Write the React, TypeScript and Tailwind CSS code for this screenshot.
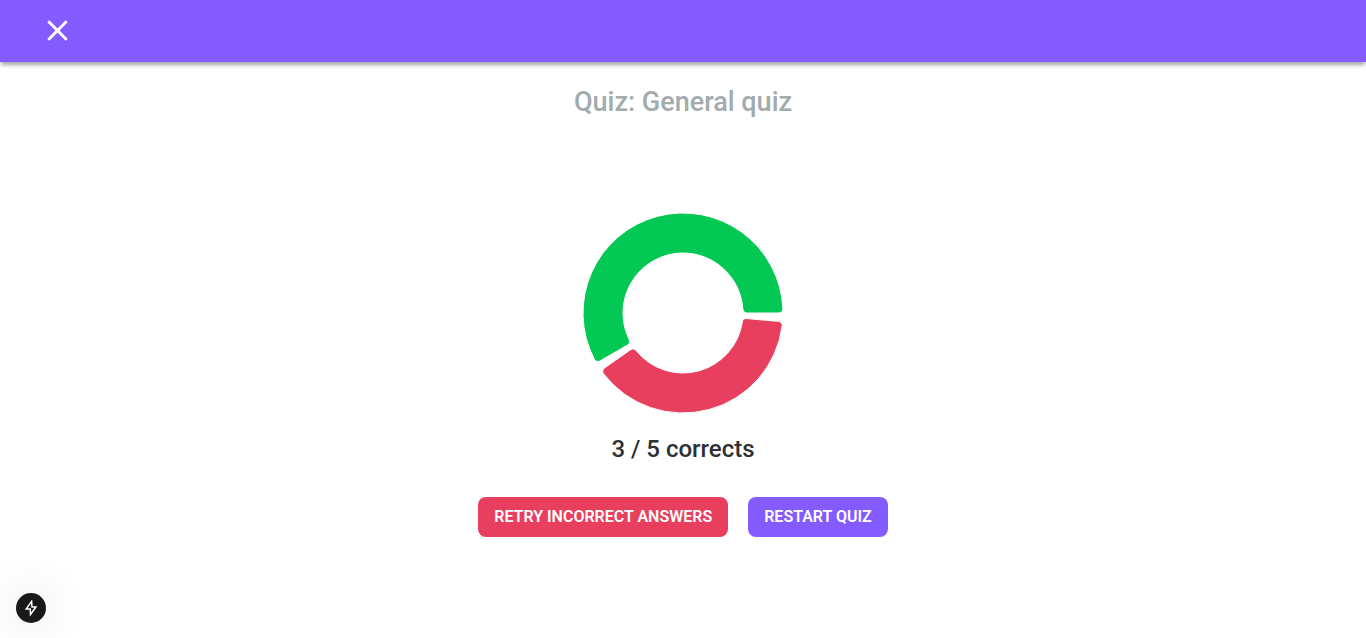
const SIZE = 200;
const OUTER = 100;
const INNER = 60;
const CORNER = 4;

function polar(radius: number, angle: number) {
  const rad = (-angle * Math.PI) / 180;
  return { x: SIZE / 2 + Math.cos(rad) * radius, y: SIZE / 2 + Math.sin(rad) * radius };
}

function corner(radius: number, angle: number, sign: number, external: boolean) {
  const centerRadius = radius + (external ? CORNER : -CORNER);
  const theta = Math.asin(CORNER / centerRadius);
  return {
    onArc: polar(radius, angle + (sign * theta * 180) / Math.PI),
    onLine: polar(centerRadius * Math.cos(theta), angle),
  };
}

/** Ring segment with rounded corners, counter-clockwise from start to end (degrees). */
function sectorPath(start: number, end: number) {
  const large = end - start > 180 ? 1 : 0;
  const a = corner(OUTER, start, 1, false);
  const b = corner(OUTER, end, -1, false);
  const c = corner(INNER, end, -1, true);
  const d = corner(INNER, start, 1, true);
  return [
    `M${a.onLine.x},${a.onLine.y}`,
    `A${CORNER},${CORNER} 0 0 0 ${a.onArc.x},${a.onArc.y}`,
    `A${OUTER},${OUTER} 0 ${large} 0 ${b.onArc.x},${b.onArc.y}`,
    `A${CORNER},${CORNER} 0 0 0 ${b.onLine.x},${b.onLine.y}`,
    `L${c.onLine.x},${c.onLine.y}`,
    `A${CORNER},${CORNER} 0 0 0 ${c.onArc.x},${c.onArc.y}`,
    `A${INNER},${INNER} 0 ${large} 1 ${d.onArc.x},${d.onArc.y}`,
    `A${CORNER},${CORNER} 0 0 0 ${d.onLine.x},${d.onLine.y}`,
    "Z",
  ].join(" ");
}

function ResultChart({ correct, total }: { correct: number; total: number }) {
  const gap = 5;
  const split = (correct / total) * (360 - gap * 2);
  return (
    <svg viewBox="0 0 200 200" className="size-[200px]" role="img" aria-label={`${correct} / ${total} corrects`}>
      <path d={sectorPath(0, split)} fill="#03c853" stroke="#fff" />
      <path d={sectorPath(split + gap, 360 - gap)} fill="#e83f5f" stroke="#fff" />
    </svg>
  );
}

export default function App() {
  return (
    <div className="min-h-screen bg-white font-['Roboto',sans-serif]">
      <header className="flex h-[62px] items-center bg-[#845bff] px-10 pb-px shadow-[0_4px_4px_-1px_rgba(0,0,0,0.35)]">
        <button type="button" aria-label="Close" className="flex size-[35px] items-center justify-center text-white">
          <svg viewBox="0 0 24 24" fill="currentColor" className="size-[35px]">
            <path d="M19 6.41 17.59 5 12 10.59 6.41 5 5 6.41 10.59 12 5 17.59 6.41 19 12 13.41 17.59 19 19 17.59 13.41 12z" />
          </svg>
        </button>
      </header>

      <main className="flex flex-col items-center pt-5">
        <h1 className="text-[27px] leading-10 font-medium text-[#a2acaf]">Quiz: General quiz</h1>
        <div className="mt-[91px]">
          <ResultChart correct={3} total={5} />
        </div>
        <p className="mt-5 text-2xl font-medium text-[#2d3034]">3 / 5 corrects</p>
        <div className="mt-8 flex gap-5">
          <button type="button" className="h-10 rounded-lg bg-[#e83f5f] px-4 text-base font-semibold text-white">
            RETRY INCORRECT ANSWERS
          </button>
          <button type="button" className="h-10 rounded-lg bg-[#845bff] px-4 text-base font-semibold text-white">
            RESTART QUIZ
          </button>
        </div>
      </main>

      <button
        type="button"
        aria-label="Static route"
        className="fixed bottom-[15px] left-4 flex size-[30px] items-center justify-center rounded-full bg-[#18191b] text-white shadow-[0_0_48px_rgba(0,0,0,0.16)]"
      >
        <svg viewBox="0 0 16 16" fill="none" stroke="currentColor" strokeWidth="1.5" strokeLinejoin="miter" className="size-4">
          <path d="M8.6 1.4 3.2 9h4v.3l.3 5.2L12.9 7H9z" />
        </svg>
      </button>
    </div>
  );
}
